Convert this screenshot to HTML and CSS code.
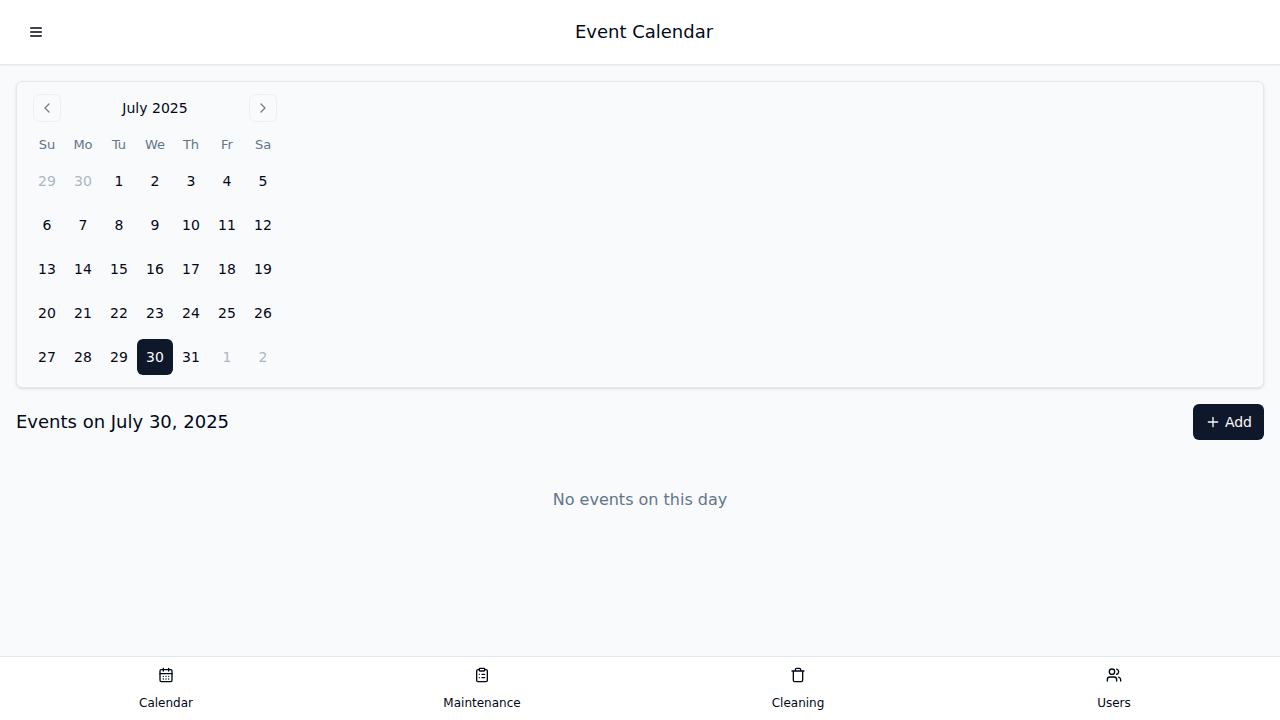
FILE: index.html
```html
<!DOCTYPE html>
<html lang="en">
<head>
<meta charset="utf-8">
<meta name="viewport" content="width=device-width, initial-scale=1">
<title>Event Calendar</title>
<link rel="stylesheet" href="styles.css">
</head>
<body>
<div class="app">
  <header class="topbar">
    <button class="menu-button" type="button" aria-label="Open menu">
      <svg class="icon" viewBox="0 0 24 24"><path d="M4 12h16M4 6h16M4 18h16"/></svg>
    </button>
    <h1 class="title">Event Calendar</h1>
    <div class="topbar-end"></div>
  </header>
  <main class="content">
    <section class="card">
      <div class="calendar">
        <div class="caption">
          <button class="month-button" type="button" aria-label="Previous month"><svg class="icon" viewBox="0 0 24 24"><path d="m15 18-6-6 6-6"/></svg></button>
          <h2 class="month">July 2025</h2>
          <button class="month-button" type="button" aria-label="Next month"><svg class="icon" viewBox="0 0 24 24"><path d="m9 18 6-6-6-6"/></svg></button>
        </div>
        <table class="days">
          <thead>
            <tr><th scope="col">Su</th><th scope="col">Mo</th><th scope="col">Tu</th><th scope="col">We</th><th scope="col">Th</th><th scope="col">Fr</th><th scope="col">Sa</th></tr>
          </thead>
          <tbody>
            <tr><td><button class="day outside">29</button></td><td><button class="day outside">30</button></td><td><button class="day">1</button></td><td><button class="day">2</button></td><td><button class="day">3</button></td><td><button class="day">4</button></td><td><button class="day">5</button></td></tr>
            <tr><td><button class="day">6</button></td><td><button class="day">7</button></td><td><button class="day">8</button></td><td><button class="day">9</button></td><td><button class="day">10</button></td><td><button class="day">11</button></td><td><button class="day">12</button></td></tr>
            <tr><td><button class="day">13</button></td><td><button class="day">14</button></td><td><button class="day">15</button></td><td><button class="day">16</button></td><td><button class="day">17</button></td><td><button class="day">18</button></td><td><button class="day">19</button></td></tr>
            <tr><td><button class="day">20</button></td><td><button class="day">21</button></td><td><button class="day">22</button></td><td><button class="day">23</button></td><td><button class="day">24</button></td><td><button class="day">25</button></td><td><button class="day">26</button></td></tr>
            <tr><td><button class="day">27</button></td><td><button class="day">28</button></td><td><button class="day">29</button></td><td><button class="day selected" aria-pressed="true">30</button></td><td><button class="day">31</button></td><td><button class="day outside">1</button></td><td><button class="day outside">2</button></td></tr>
          </tbody>
        </table>
      </div>
    </section>
    <section class="events">
      <div class="events-head">
        <h2 class="title-small">Events on July 30, 2025</h2>
        <button class="add-button" type="button"><svg class="icon" viewBox="0 0 24 24"><path d="M5 12h14M12 5v14"/></svg>Add</button>
      </div>
      <p class="empty">No events on this day</p>
    </section>
  </main>
  <nav class="tabs">
    <a class="tab" href="#calendar">
      <svg class="icon" viewBox="0 0 24 24"><path d="M8 2v4M16 2v4"/><rect width="18" height="18" x="3" y="4" rx="2"/><path d="M3 10h18M8 14h.01M12 14h.01M16 14h.01M8 18h.01M12 18h.01M16 18h.01"/></svg>
      <span>Calendar</span>
    </a>
    <a class="tab" href="#maintenance">
      <svg class="icon" viewBox="0 0 24 24"><rect width="8" height="4" x="8" y="2" rx="1"/><path d="M16 4h2a2 2 0 0 1 2 2v14a2 2 0 0 1-2 2H6a2 2 0 0 1-2-2V6a2 2 0 0 1 2-2h2M12 11h4M12 16h4M8 11h.01M8 16h.01"/></svg>
      <span>Maintenance</span>
    </a>
    <a class="tab" href="#cleaning">
      <svg class="icon" viewBox="0 0 24 24"><path d="M3 6h18M19 6v14c0 1-1 2-2 2H7c-1 0-2-1-2-2V6M8 6V4c0-1 1-2 2-2h4c1 0 2 1 2 2v2"/></svg>
      <span>Cleaning</span>
    </a>
    <a class="tab" href="#users">
      <svg class="icon" viewBox="0 0 24 24"><path d="M16 21v-2a4 4 0 0 0-4-4H6a4 4 0 0 0-4 4v2"/><circle cx="9" cy="7" r="4"/><path d="M22 21v-2a4 4 0 0 0-3-3.87M16 3.13a4 4 0 0 1 0 7.75"/></svg>
      <span>Users</span>
    </a>
  </nav>
</div>
</body>
</html>
```
FILE: styles.css
```css
*, *::before, *::after { box-sizing: border-box; }

body {
  margin: 0;
  background: #f8fafc;
  color: #020817;
  font-family: "DejaVu Sans", sans-serif;
  font-size: 16px;
  line-height: 24px;
}

h1, h2, p { margin: 0; font-weight: 400; }

button {
  margin: 0;
  padding: 0;
  border: 0;
  background: transparent;
  color: inherit;
  font: inherit;
  cursor: pointer;
}

.icon {
  display: block;
  flex: none;
  width: 16px;
  height: 16px;
  fill: none;
  stroke: currentColor;
  stroke-width: 2;
  stroke-linecap: round;
  stroke-linejoin: round;
}

.app { display: flex; flex-direction: column; min-height: 100vh; }

.topbar {
  display: flex;
  align-items: center;
  padding: 12px 16px;
  border-bottom: 1px solid #e2e8f0;
  background: #fff;
  box-shadow: 0 1px 2px rgba(0, 0, 0, 0.05);
}

.menu-button, .month-button {
  display: flex;
  align-items: center;
  justify-content: center;
  border-radius: 6px;
}

.menu-button { width: 40px; height: 40px; }

.title, .title-small { font-size: 18px; line-height: 28px; }
.title { flex: 1; text-align: center; }
.topbar-end { width: 32px; }

.content { flex: 1; padding: 16px; }

.card {
  padding: 12px;
  border: 1px solid #e2e8f0;
  border-radius: 6px;
  box-shadow: 0 1px 3px rgba(0, 0, 0, 0.1), 0 1px 2px -1px rgba(0, 0, 0, 0.1);
}

.calendar { width: fit-content; }

.caption {
  display: flex;
  align-items: center;
  justify-content: space-between;
  margin-bottom: 12px;
  padding: 0 4px;
}

.month { font-size: 14px; line-height: 20px; }

.month-button {
  width: 28px;
  height: 28px;
  border: 1px solid #e2e8f0;
  opacity: 0.5;
}

.days { border-collapse: collapse; }
.days th, .days td { padding: 0; }

.days th {
  color: #64748b;
  font-size: 13px;
  font-weight: 400;
  line-height: 21px;
}

.days td { padding-top: 8px; }

.day {
  display: block;
  width: 36px;
  height: 36px;
  border-radius: 6px;
  font-size: 14px;
  line-height: 20px;
}

.outside { color: #64748b; opacity: 0.5; }
.selected { background: #0f172a; color: #f8fafc; }

.events-head {
  display: flex;
  align-items: center;
  justify-content: space-between;
  margin-top: 16px;
}

.add-button {
  display: flex;
  align-items: center;
  gap: 4px;
  height: 36px;
  padding: 0 12px;
  border-radius: 6px;
  background: #0f172a;
  color: #f8fafc;
  font-size: 14px;
  line-height: 20px;
}

.empty {
  padding: 48px 0;
  color: #64748b;
  text-align: center;
}

.tabs {
  display: grid;
  grid-template-columns: repeat(4, 1fr);
  padding: 0 8px;
  border-top: 1px solid #e2e8f0;
  background: #fff;
}

.tab {
  display: flex;
  flex-direction: column;
  align-items: center;
  gap: 12px;
  padding: 10px 0 9px;
  color: inherit;
  font-size: 12px;
  line-height: 16px;
  text-decoration: none;
}
```
